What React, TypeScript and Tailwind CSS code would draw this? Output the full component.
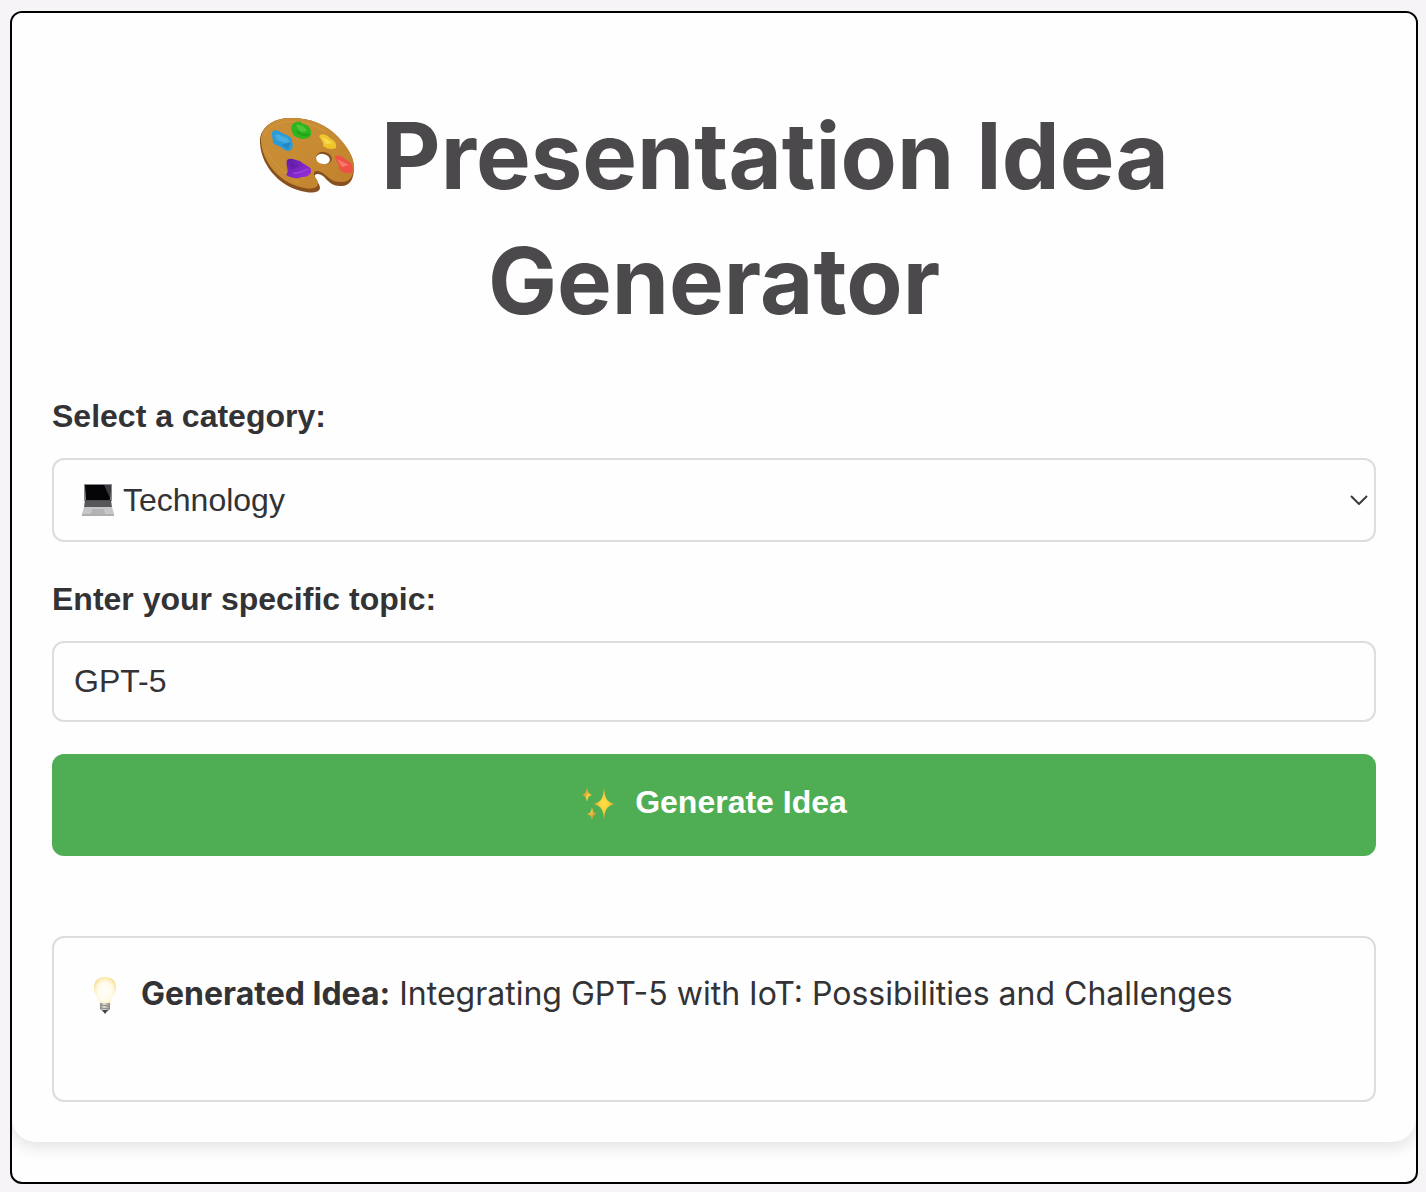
import { useState } from "react";
import type { FormEvent } from "react";

function PaletteIcon() {
  return (
    <svg viewBox="0 0 96 76" className="mr-6 inline-block h-[76px] w-[98px] align-[-5px]" aria-hidden="true">
      <defs>
        <linearGradient id="wood" x1="0" y1="0" x2="1" y2="1">
          <stop offset="0" stopColor="#c98f38" />
          <stop offset="0.5" stopColor="#c78b33" />
          <stop offset="1" stopColor="#c07f2b" />
        </linearGradient>
        <linearGradient id="violet" x1="0" y1="0" x2="1" y2="1">
          <stop offset="0" stopColor="#5f1ca5" />
          <stop offset="1" stopColor="#9b30df" />
        </linearGradient>
      </defs>
      <path d="M0 21C2 8 14 0 31 0c20 0 36 7 47 19 9 10 16 20 16 31 0 12-5 19-14 18-8 0-12-5-17-10-3-2-6-3-8-1-2 3 5 8 5 13-1 6-12 5-19 3C19 68-1 46 0 21Z" fill="#87501e" />
      <path d="M1 19C4 6 15 0 31 0c20 0 36 7 47 19 9 9 16 20 16 29 0 11-5 17-14 16-8 0-12-5-17-9-4-2-8-3-9 0-1 3 5 7 4 11-1 6-11 5-18 3C19 64 0 42 1 19Z" fill="url(#wood)" />
      <path d="M4 18C12 0 44-1 66 14M5 30c8 15 20 27 34 35" fill="none" stroke="#dda64d" strokeWidth="1" opacity=".5" />
      <ellipse cx="64" cy="40" rx="8" ry="6" fill="#84501f" transform="rotate(15 64 40)" />
      <ellipse cx="63" cy="41" rx="7" ry="5" fill="#fefefe" transform="rotate(15 63 41)" />
      <path d="M12 14c4-4 8 0 12 2 4 1 9 4 8 8 2 4 0 9-4 9-4 0-7-5-12-6-5-2-2-5-4-8Z" fill="#2c9bd6" />
      <path d="M15 17c4-2 8 2 12 3l3 4c-6 2-9-1-13-2Z" fill="#67bfeb" opacity=".5" />
      <path d="m21 27 10-3-3 7Z" fill="#1a78b4" opacity=".5" />
      <path d="M32 7c3-4 8-5 11-1 5 0 9 5 8 11-2 4-8 5-12 3-6-1-9-8-7-13Z" fill="#2fb420" />
      <path d="M36 7c5-1 9 2 11 6-4 2-9 0-10-4Z" fill="#65d14a" opacity=".6" />
      <path d="M37 13c3 4 7 5 12 3" fill="none" stroke="#199516" strokeWidth="2" opacity=".6" />
      <path d="M59 18c4-4 9 0 12 3 4 1 6 6 5 9-4 2-9 1-13-2 1-4-2-6-4-10Z" fill="#eec62b" />
      <path d="m62 19 11 6-7 1Z" fill="#ffe260" opacity=".7" />
      <path d="M75 38c4-2 9 2 13 5 4 2 6 7 4 12-5 1-12-1-13-5 1-4-4-7-4-12Z" fill="#ef5146" />
      <path d="m77 41 12 6-7 2Z" fill="#ff8b78" opacity=".7" />
      <path d="M27 42c4-3 8 0 13 1 3 4 12 5 11 10 0 5-6 6-9 6-4 2-9 2-16-2 4-4-1-10 1-15Z" fill="url(#violet)" />
      <path d="m30 44 10 4-9 4Z" fill="#4b148b" opacity=".3" />
      <path d="M33 55c5 1 10-2 15-4" fill="none" stroke="#bd5df0" strokeWidth="1" opacity=".7" />
    </svg>
  );
}

function LaptopIcon() {
  return (
    <svg viewBox="0 0 32 32" className="h-8 w-8" aria-hidden="true">
      <path d="M2 0h28v17H2Z" fill="#8a8a8c" />
      <path d="M3 1h26l-1 15H4Z" fill="#050508" />
      <path d="M22 1h7l-1 13Z" fill="#3c3c42" />
      <path d="M3 16h26l1 8H2Z" fill="#4c4c4f" />
      <path d="M4 18h24M3 20h26M3 22h26" stroke="#626266" strokeWidth="1" />
      <path d="M2 23h28l2 7v2H0v-2Z" fill="#c6c6c8" />
      <path d="M10 25h12l1 5H9Z" fill="#b3b3b6" />
      <path d="M0 31h32" stroke="#98989b" />
    </svg>
  );
}

function SparklesIcon() {
  return (
    <svg viewBox="0 0 34 36" className="h-9 w-[34px]" aria-hidden="true">
      <defs>
        <radialGradient id="spark">
          <stop offset="0" stopColor="#ffe14a" />
          <stop offset="0.45" stopColor="#fbcf3c" />
          <stop offset="1" stopColor="#cf9838" />
        </radialGradient>
      </defs>
      <path d="M23 3C24 14 25 18 34 20 25 22 24 26 23 36 22 26 21 22 12 20 21 18 22 14 23 3Z" fill="url(#spark)" />
      <path d="M6 3c1 5 1 6 5 8-4 1-4 3-5 7-1-4-1-6-5-7 4-2 4-3 5-8ZM11 23c1 4 1 6 5 7-4 1-4 3-5 6-1-3-1-5-5-6 4-1 4-3 5-7Z" fill="url(#spark)" />
    </svg>
  );
}

function BulbIcon() {
  return (
    <svg viewBox="0 0 24 38" className="mt-0.5 h-[38px] w-6" aria-hidden="true">
      <defs>
        <radialGradient id="glow" cx="50%" cy="52%" r="58%">
          <stop offset="0" stopColor="#fffef8" />
          <stop offset="0.55" stopColor="#fffbed" />
          <stop offset="0.8" stopColor="#fcefbd" />
          <stop offset="1" stopColor="#efd477" />
        </radialGradient>
        <linearGradient id="metal">
          <stop offset="0" stopColor="#8c8782" />
          <stop offset="0.4" stopColor="#e7e4df" />
          <stop offset="1" stopColor="#8c8782" />
        </linearGradient>
      </defs>
      <path d="M12 1C4 1 1 6 1 12c0 6 4 8 5 13 0 3 2 4 6 4s6-1 6-4c1-5 5-7 5-13C23 6 20 1 12 1Z" fill="url(#glow)" />
      <path d="M7 27h10v6l-3 3h-4l-3-3Z" fill="url(#metal)" />
      <path d="m7 29 10 1M7 32l10 1" stroke="#8c8884" strokeWidth="1" />
      <path d="M9 34h6l-3 4Z" fill="#454346" />
    </svg>
  );
}

const labelClass = "block text-[32px] leading-9 font-bold";
const fieldClass =
  "block w-full rounded-xl border-2 border-[#dddcde] bg-transparent text-[32px] leading-9 text-[#333235] outline-none focus:border-[#4fae54]";

export default function App() {
  const [category, setCategory] = useState("Technology");
  const [topic, setTopic] = useState("GPT-5");
  const [idea, setIdea] = useState("Integrating GPT-5 with IoT: Possibilities and Challenges");

  const generate = (event: FormEvent) => {
    event.preventDefault();
    setIdea(`Integrating ${topic} with IoT: Possibilities and Challenges`);
  };

  return (
    <div className="bg-[#f7f4f7] pt-[11px] pr-2 pb-2 pl-2.5 font-['Liberation_Sans',Arial,sans-serif] text-[#333235]">
      <div className="overflow-hidden rounded-xl border-2 border-black bg-[#fefefe] pb-10">
        <main className="rounded-b-[24px] bg-[#fefefe] px-10 pt-20 pb-10 shadow-[0_4px_16px_rgba(40,30,50,0.14)]">
          <h1 className="text-center font-[Inter,sans-serif] text-[92px] leading-[125px] font-bold text-[#4b494c]">
            <PaletteIcon />
            Presentation Idea Generator
          </h1>

          <form onSubmit={generate} className="mt-[55px]">
            <label htmlFor="category" className={labelClass}>Select a category:</label>
            <div className="relative mt-6">
              <select
                id="category"
                value={category}
                onChange={(event) => setCategory(event.target.value)}
                className={`${fieldClass} h-[84px] appearance-none pr-14 pl-[69px]`}
              >
                <option>Technology</option>
                <option>Business</option>
                <option>Education</option>
              </select>
              <span className="pointer-events-none absolute inset-y-0 left-[30px] flex items-center">
                <LaptopIcon />
              </span>
              <span className="pointer-events-none absolute inset-y-0 right-2 flex items-center">
                <svg viewBox="0 0 18 10" className="h-2.5 w-[18px]" fill="none" stroke="#3b3a3c" strokeWidth="2" aria-hidden="true">
                  <path d="m1 1 8 8 8-8" />
                </svg>
              </span>
            </div>

            <label htmlFor="topic" className={`${labelClass} mt-[39px]`}>Enter your specific topic:</label>
            <input
              id="topic"
              type="text"
              value={topic}
              onChange={(event) => setTopic(event.target.value)}
              className={`${fieldClass} mt-6 h-[81px] px-5`}
            />

            <button
              type="submit"
              className="mt-8 flex h-[102px] w-full items-center justify-center gap-5 rounded-xl bg-[#4fae54] pb-1.5 text-[32px] leading-9 font-bold text-white"
            >
              <SparklesIcon />
              Generate Idea
            </button>
          </form>

          <section className="mt-20 flex min-h-[166px] items-start rounded-xl border-2 border-[#dddcde] px-[39px] pt-9" aria-live="polite">
            <BulbIcon />
            <p className="ml-6 font-[Inter,sans-serif] text-[32px] leading-10">
              <strong>Generated Idea:</strong> {idea}
            </p>
          </section>
        </main>
      </div>
    </div>
  );
}
